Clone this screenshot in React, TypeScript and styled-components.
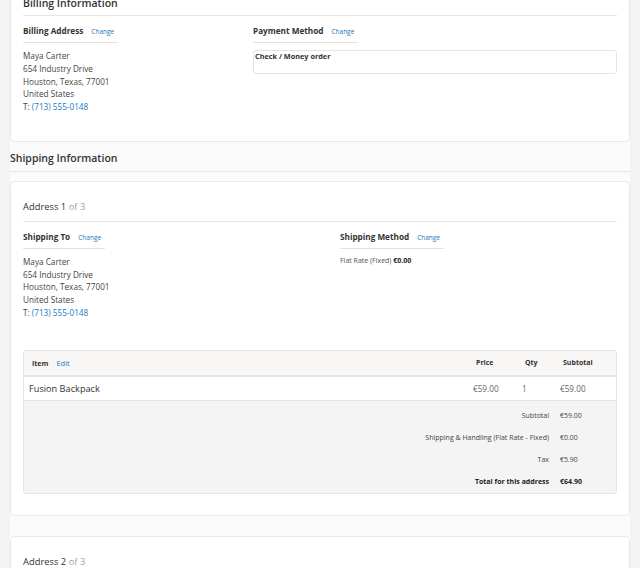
import React from 'react';
import styled, { createGlobalStyle } from 'styled-components';

const GlobalStyle = createGlobalStyle`
  html, body {
    margin: 0;
    background: #f4f2f2;
  }
  body {
    font-family: 'Open Sans', 'Liberation Sans', sans-serif;
    color: #333;
  }
`;

const Page = styled.main`
  width: 620px;
  margin: -23px 10px 0;
  background: #fbfbfb;
  min-height: 640px;
  display: flex;
  flex-direction: column;
`;

const Card = styled.section<{ $mt?: number; $pb?: number }>`
  background: #fff;
  border: 1px solid #e8e8e8;
  border-radius: 5px;
  padding: 18px 12px ${(p) => p.$pb ?? 21}px;
  margin-top: ${(p) => p.$mt ?? 0}px;
`;

const CardHeading = styled.h2<{ $large?: boolean }>`
  margin: 0;
  font-size: ${(p) => (p.$large ? '10.5px' : '9.4px')};
  font-weight: ${(p) => (p.$large ? 600 : 400)};
  line-height: 14px;
  padding-bottom: ${(p) => (p.$large ? 5 : 7)}px;
  border-bottom: 1px solid #e6e6e6;
  color: #333;
`;

const Muted = styled.span`
  color: #a3a3a3;
`;

const SectionHeading = styled.h2`
  margin: 9px 0 0;
  font-size: 10.5px;
  font-weight: 600;
  line-height: 14px;
  padding-bottom: 6px;
  border-bottom: 1px solid #e6e6e6;
  color: #333;
`;

const Columns = styled.div<{ $left: number }>`
  display: grid;
  grid-template-columns: ${(p) => p.$left}px 1fr;
  margin-top: 9px;
`;

const Col = styled.div`
  display: flex;
  flex-direction: column;
  align-items: flex-start;
`;

const BlockTitle = styled.div`
  display: inline-flex;
  align-items: baseline;
  gap: 8px;
  padding: 0 4px 5px 0;
  border-bottom: 1px solid #e3e3e3;
  line-height: 11px;

  strong {
    font-size: 8.2px;
    font-weight: 700;
    color: #333;
  }
`;

const Link = styled.a<{ $size?: number }>`
  font-size: ${(p) => (p.$size ? `${p.$size}px` : 'inherit')};
  color: #1979c3;
  text-decoration: none;
`;

const Address = styled.address`
  font-style: normal;
  margin-top: 7px;
  font-size: 8.2px;
  line-height: 12.75px;
  color: #444;
`;

const PaymentBox = styled.div`
  align-self: stretch;
  box-sizing: border-box;
  margin-top: 7px;
  height: 24px;
  border: 1px solid #e4e4e4;
  border-radius: 3px;
  padding: 0 1px;
  font-size: 7.3px;
  font-weight: 700;
  line-height: 10px;
  color: #333;
`;

const MethodText = styled.div`
  margin-top: 7px;
  font-size: 7px;
  line-height: 10px;
  color: #555;

  b {
    color: #222;
    font-weight: 700;
  }
`;

const Table = styled.div`
  margin-top: 30px;
  border: 1px solid #e4e4e4;
  border-radius: 3px;
  overflow: hidden;
`;

const Row = styled.div`
  display: grid;
  grid-template-columns: 1fr 49px 38px 56px;
  align-items: center;
`;

const HeadRow = styled(Row)`
  height: 24px;
  background: #f8f7f6;
  border-bottom: 2px solid #e6e6e6;
  font-size: 7px;
  font-weight: 700;
  color: #333;
`;

const HeadCell = styled.div<{ $first?: boolean }>`
  padding-left: ${(p) => (p.$first ? 8 : 3)}px;
  display: flex;
  align-items: baseline;
  gap: 8px;
`;

const BodyRow = styled(Row)`
  height: 23px;
  background: #fff;
  border-bottom: 1px solid #e4e4e4;
`;

const ItemName = styled.div`
  padding-left: 5px;
  font-size: 9.2px;
  color: #333;
`;

const Value = styled.div`
  font-size: 8.2px;
  color: #666;
`;

const Totals = styled.div`
  background: #f4f4f4;
  padding-top: 4px;
`;

const TotalRow = styled.div<{ $strong?: boolean }>`
  display: grid;
  grid-template-columns: 1fr 56px;
  align-items: center;
  height: 22px;
  font-size: 7px;
  font-weight: ${(p) => (p.$strong ? 700 : 400)};
  color: ${(p) => (p.$strong ? '#222' : '#444')};
`;

const TotalLabel = styled.div`
  text-align: right;
  padding-right: 11px;
`;

type Contact = { name: string; street: string; city: string; country: string; phone: string };

const maya: Contact = {
  name: 'Maya Carter',
  street: '654 Industry Drive',
  city: 'Houston, Texas, 77001',
  country: 'United States',
  phone: '(713) 555-0148',
};

const AddressLines = ({ c }: { c: Contact }) => (
  <Address>
    {c.name}
    <br />
    {c.street}
    <br />
    {c.city}
    <br />
    {c.country}
    <br />
    T: <Link href="#">{c.phone}</Link>
  </Address>
);

const Title = ({ label }: { label: string }) => (
  <BlockTitle>
    <strong>{label}</strong>
    <Link href="#" $size={6.5}>
      Change
    </Link>
  </BlockTitle>
);

const totals = [
  { label: 'Subtotal', value: '€59.00' },
  { label: 'Shipping & Handling (Flat Rate - Fixed)', value: '€0.00' },
  { label: 'Tax', value: '€5.90' },
];

const App = () => {
  return (
    <>
      <GlobalStyle />
      <Page>
        <Card $pb={27}>
          <CardHeading $large>Billing Information</CardHeading>
          <Columns $left={230}>
            <Col>
              <Title label="Billing Address" />
              <AddressLines c={maya} />
            </Col>
            <Col>
              <Title label="Payment Method" />
              <PaymentBox>Check / Money order</PaymentBox>
            </Col>
          </Columns>
        </Card>

        <SectionHeading>Shipping Information</SectionHeading>

        <Card $mt={9}>
          <CardHeading>
            Address 1 <Muted>of 3</Muted>
          </CardHeading>
          <Columns $left={317}>
            <Col>
              <Title label="Shipping To" />
              <AddressLines c={maya} />
            </Col>
            <Col>
              <Title label="Shipping Method" />
              <MethodText>
                Flat Rate (Fixed) <b>€0.00</b>
              </MethodText>
            </Col>
          </Columns>

          <Table>
            <HeadRow>
              <HeadCell $first>
                Item
                <Link href="#" $size={7.5} style={{ fontWeight: 400 }}>
                  Edit
                </Link>
              </HeadCell>
              <HeadCell>Price</HeadCell>
              <HeadCell>Qty</HeadCell>
              <HeadCell>Subtotal</HeadCell>
            </HeadRow>
            <BodyRow>
              <ItemName>Fusion Backpack</ItemName>
              <Value>€59.00</Value>
              <Value>1</Value>
              <Value>€59.00</Value>
            </BodyRow>
            <Totals>
              {totals.map((t) => (
                <TotalRow key={t.label}>
                  <TotalLabel>{t.label}</TotalLabel>
                  <div>{t.value}</div>
                </TotalRow>
              ))}
              <TotalRow $strong>
                <TotalLabel>Total for this address</TotalLabel>
                <div>€64.90</div>
              </TotalRow>
            </Totals>
          </Table>
        </Card>

        <Card $mt={20}>
          <CardHeading>
            Address 2 <Muted>of 3</Muted>
          </CardHeading>
          <Columns $left={317}>
            <Col>
              <Title label="Shipping To" />
              <AddressLines c={maya} />
            </Col>
            <Col>
              <Title label="Shipping Method" />
              <MethodText>
                Flat Rate (Fixed) <b>€0.00</b>
              </MethodText>
            </Col>
          </Columns>
        </Card>
      </Page>
    </>
  );
};

export default App;
